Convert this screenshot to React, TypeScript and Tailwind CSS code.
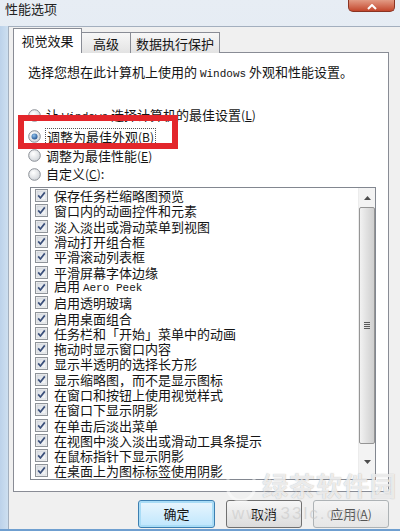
import React from "react";

const CJK = '"Noto Sans CJK SC", "Noto Sans", sans-serif';
const MONO = '"Liberation Mono", "Noto Sans CJK SC", monospace';

const items: React.ReactNode[] = [
  "保存任务栏缩略图预览",
  "窗口内的动画控件和元素",
  "淡入淡出或滑动菜单到视图",
  "滑动打开组合框",
  "平滑滚动列表框",
  "平滑屏幕字体边缘",
  <>
    启用 <span style={{ fontFamily: MONO }} className="text-[11px]">Aero Peek</span>
  </>,
  "启用透明玻璃",
  "启用桌面组合",
  "任务栏和「开始」菜单中的动画",
  "拖动时显示窗口内容",
  "显示半透明的选择长方形",
  "显示缩略图，而不是显示图标",
  "在窗口和按钮上使用视觉样式",
  "在窗口下显示阴影",
  "在单击后淡出菜单",
  "在视图中淡入淡出或滑动工具条提示",
  "在鼠标指针下显示阴影",
  "在桌面上为图标标签使用阴影",
];

function Radio({ checked }: { checked?: boolean }) {
  return (
    <svg width="13" height="13" viewBox="0 0 13 13" className="shrink-0">
      <defs>
        <radialGradient id={checked ? "rg1" : "rg0"} cx="0.4" cy="0.35" r="0.7">
          <stop offset="0" stopColor="#ffffff" />
          <stop offset="1" stopColor="#cfd3d8" />
        </radialGradient>
        <radialGradient id="dot" cx="0.4" cy="0.35" r="0.7">
          <stop offset="0" stopColor="#8fc1ec" />
          <stop offset="1" stopColor="#1d4f8f" />
        </radialGradient>
      </defs>
      <circle cx="6.5" cy="6.5" r="5.8" fill={`url(#${checked ? "rg1" : "rg0"})`} stroke="#8a8f96" strokeWidth="1" />
      {checked && <circle cx="6.5" cy="6.5" r="3" fill="url(#dot)" />}
    </svg>
  );
}

function Check() {
  return (
    <svg width="13" height="13" viewBox="0 0 13 13" className="shrink-0">
      <defs>
        <linearGradient id="cb" x1="0" y1="0" x2="1" y2="1">
          <stop offset="0" stopColor="#d9dde3" />
          <stop offset="1" stopColor="#f8f9fa" />
        </linearGradient>
      </defs>
      <rect x="0.5" y="0.5" width="12" height="12" fill="#f4f4f4" stroke="#8e9399" />
      <rect x="2" y="2" width="9" height="9" fill="url(#cb)" stroke="#c6cbd2" strokeWidth="0.6" />
      <path d="M3.2 6.4 L5.4 9 L9.8 3.4" fill="none" stroke="#3a4f7a" strokeWidth="1.7" strokeLinejoin="round" />
    </svg>
  );
}

function Key({ k }: { k: string }) {
  return (
    <span className="text-[12px]">
      (<span className="underline">{k}</span>)
    </span>
  );
}

export default function App() {
  return (
    <div
      className="w-[400px] h-[531px] overflow-hidden relative flex flex-col bg-gradient-to-b from-[#e7edf4] to-[#d3e1ef] text-[#141414]"
      style={{ fontFamily: CJK }}
    >
      {/* title bar */}
      <div className="h-[26px] shrink-0 flex items-start">
        <div className="pl-[5px] pt-[1px] text-[13px] leading-[16px] text-[#222]">性能选项</div>
        <div className="ml-auto mr-[5px] w-[47px] h-[12px] rounded-b-[5px] bg-gradient-to-b from-[#e29a84] to-[#c2452b] border border-t-0 border-[#8a3322] flex items-end justify-center pb-[1px]">
          <svg width="10" height="6" viewBox="0 0 10 6">
            <path d="M1 5 L5 1 L9 5" fill="none" stroke="#fff" strokeWidth="2" />
          </svg>
        </div>
      </div>

      <div className="flex-1 flex min-h-0">
        <div className="w-[8px] shrink-0 bg-gradient-to-r from-[#bcd2ea] to-[#cddff0]" />
        <div className="flex-1 bg-[#f0f0f0] border-t border-l border-[#a3afbe] flex flex-col">
          {/* tabs */}
          <div className="flex items-end pl-[4px] pt-[1px] h-[26px] relative z-10">
            <div className="w-[69px] h-[25px] bg-white border border-b-0 border-[#898c95] flex items-center justify-center text-[13px] leading-none pb-[2px]">
              视觉效果
            </div>
            <div className="w-[49px] h-[21px] bg-gradient-to-b from-[#f7f7f7] to-[#e3e3e3] border border-l-0 border-b-0 border-[#898c95] flex items-center justify-center text-[13px] leading-none">
              高级
            </div>
            <div className="w-[89px] h-[21px] bg-gradient-to-b from-[#f7f7f7] to-[#e3e3e3] border border-l-0 border-b-0 border-[#898c95] flex items-center justify-center text-[13px] leading-none">
              数据执行保护
            </div>
          </div>

          {/* panel */}
          <div className="ml-[4px] mr-[11px] -mt-[1px] h-[440px] bg-white border border-[#898c95] flex flex-col">
            <div className="pl-[14px] pt-[11px] text-[13px] leading-[15px] whitespace-nowrap">
              选择您想在此计算机上使用的 <span style={{ fontFamily: MONO }} className="text-[11px]">Windows</span> 外观和性能设置。
            </div>

            <div className="mt-[23px] flex flex-col text-[13px]">
              <div className="h-[21px] flex items-center pl-[14px] gap-[5px]">
                <Radio />
                <span className="whitespace-nowrap">
                  让 <span style={{ fontFamily: MONO }} className="text-[11px]">Windows</span> 选择计算机的最佳设置<Key k="L" />
                </span>
              </div>
              <div className="h-[20px] flex items-center pl-[14px] gap-[4px]">
                <Radio checked />
                <span className="whitespace-nowrap border border-dotted border-[#555] px-[1px] leading-[15px]">
                  调整为最佳外观<Key k="B" />
                </span>
              </div>
              <div className="h-[19px] flex items-center pl-[14px] gap-[5px]">
                <Radio />
                <span className="whitespace-nowrap">
                  调整为最佳性能<Key k="E" />
                </span>
              </div>
              <div className="h-[18px] flex items-center pl-[14px] gap-[5px]">
                <Radio />
                <span className="whitespace-nowrap">
                  自定义<Key k="C" />:
                </span>
              </div>
            </div>

            {/* listbox */}
            <div className="mt-[4px] ml-[16px] mr-[12px] h-[293px] border border-[#828790] flex">
              <div className="flex-1 flex flex-col">
                {items.map((t, i) => (
                  <div key={i} className="h-[15.3px] flex items-center pl-[4px] gap-[6px] text-[13px] leading-[15px] whitespace-nowrap">
                    <Check />
                    <span>{t}</span>
                  </div>
                ))}
              </div>
              {/* scrollbar */}
              <div className="w-[17px] shrink-0 bg-[#f3f3f3] border-l border-[#ececec] flex flex-col items-center">
                <div className="h-[19px] flex items-center justify-center">
                  <svg width="7" height="4" viewBox="0 0 7 4">
                    <path d="M0 4 L3.5 0 L7 4 Z" fill="#4d4d4d" />
                  </svg>
                </div>
                <div className="w-[16px] h-[237px] rounded-[2px] border border-[#959595] bg-gradient-to-r from-[#f2f2f2] via-[#e0e0e0] to-[#cfcfcf] flex items-center justify-center">
                  <div className="flex flex-col gap-[1px]">
                    <div className="w-[6px] h-[1px] bg-[#5a5a5a]" />
                    <div className="w-[6px] h-[1px] bg-[#5a5a5a]" />
                    <div className="w-[6px] h-[1px] bg-[#5a5a5a]" />
                    <div className="w-[6px] h-[1px] bg-[#5a5a5a]" />
                  </div>
                </div>
                <div className="flex-1 flex items-center justify-center">
                  <svg width="7" height="4" viewBox="0 0 7 4">
                    <path d="M0 0 L3.5 4 L7 0 Z" fill="#4d4d4d" />
                  </svg>
                </div>
              </div>
            </div>
          </div>

          {/* buttons */}
          <div className="mt-[8px] mr-[11px] flex justify-end gap-[11px] text-[13px]">
            <div className="w-[77px] h-[28px] rounded-[3px] border border-[#3c7fb1] bg-gradient-to-b from-[#eaf6fd] to-[#bee6fd] shadow-[inset_0_0_0_2px_#a9dcf6] flex items-center justify-center">
              确定
            </div>
            <div className="w-[76px] h-[28px] rounded-[3px] border border-[#707070] bg-gradient-to-b from-[#f6f6f6] to-[#dcdcdc] flex items-center justify-center">
              取消
            </div>
            <div className="w-[76px] h-[28px] rounded-[3px] border border-[#adb2b5] bg-gradient-to-b from-[#f4f4f4] to-[#e6e6e6] flex items-center justify-center text-[#555]">
              应用<Key k="A" />
            </div>
          </div>
        </div>
      </div>
      <div className="h-[2px] shrink-0 bg-[#6f9fd0]" />

      {/* red highlight box */}
      <div className="absolute left-[18px] top-[115px] w-[160px] h-[34px] border-[6px] border-[#e3262b]" />

      {/* watermark */}
      <div className="absolute left-[226px] top-[468px] w-[30px] h-[34px] rounded-full border-[3px] border-white/70 opacity-70" />
      <div
        className="absolute left-[262px] top-[470px] text-[26px] font-bold leading-[30px] text-white/75 tracking-[1px]"
        style={{ textShadow: "0 0 1px rgba(120,120,120,0.6)" }}
      >
        绿茶软件园
      </div>
      <div
        className="absolute left-[232px] top-[503px] text-[17px] leading-[22px] text-[#c8c8c8]/60 tracking-[2px]"
        style={{ fontFamily: '"Liberation Sans", sans-serif' }}
      >
        www.33lc.com
      </div>
    </div>
  );
}
